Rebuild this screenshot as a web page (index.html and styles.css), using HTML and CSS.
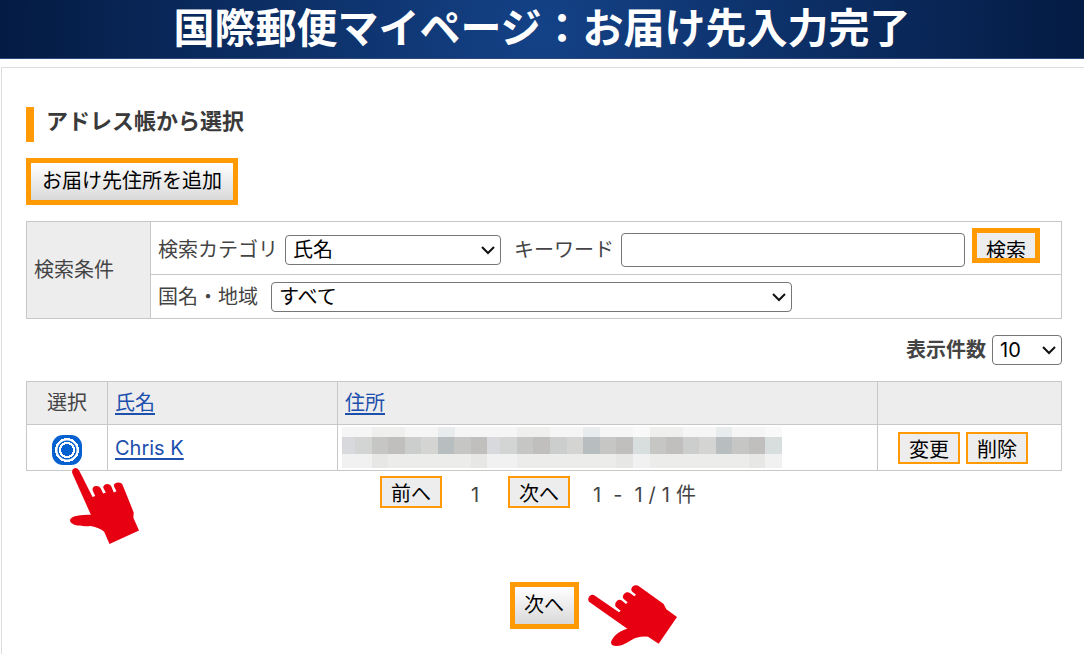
FILE: index.html
```html
<!DOCTYPE html>
<html lang="ja">
<head>
<meta charset="utf-8">
<title>国際郵便マイページ：お届け先入力完了</title>
<link rel="stylesheet" href="styles.css">
</head>
<body>
<header class="banner"><h1 class="banner-title">国際郵便マイページ：お届け先入力完了</h1></header>
<main class="panel">
  <h2 class="section-title">アドレス帳から選択</h2>
  <button class="btn-large" type="button">お届け先住所を追加</button>

  <table class="grid search">
    <tr>
      <th class="search-head" rowspan="2" scope="rowgroup">検索条件</th>
      <td class="search-first">
        <div class="fields">
          <label for="category">検索カテゴリ</label>
          <span class="select select-category">
            <select id="category"><option>氏名</option></select>
            <svg class="chevron" viewBox="0 0 14 9"><path d="M1 1l6 6 6-6"/></svg>
          </span>
          <label class="keyword-label" for="keyword">キーワード</label>
          <input class="keyword" id="keyword" type="text">
          <button class="btn-search" type="button">検索</button>
        </div>
      </td>
    </tr>
    <tr>
      <td class="search-second">
        <div class="fields fields-country">
          <label for="country">国名・地域</label>
          <span class="select select-country">
            <select id="country"><option>すべて</option></select>
            <svg class="chevron" viewBox="0 0 14 9"><path d="M1 1l6 6 6-6"/></svg>
          </span>
        </div>
      </td>
    </tr>
  </table>

  <div class="count">
    <label class="count-label" for="count">表示件数</label>
    <span class="select select-count">
      <select id="count"><option>10</option></select>
      <svg class="chevron" viewBox="0 0 14 9"><path d="M1 1l6 6 6-6"/></svg>
    </span>
  </div>

  <table class="grid results">
    <colgroup><col class="col-pick"><col class="col-name"><col class="col-address"><col class="col-actions"></colgroup>
    <thead>
      <tr>
        <th class="center" scope="col">選択</th>
        <th scope="col"><a href="#">氏名</a></th>
        <th scope="col"><a href="#">住所</a></th>
        <th></th>
      </tr>
    </thead>
    <tbody>
      <tr>
        <td class="pick">
          <input class="radio" type="radio" name="address" aria-label="Chris K" checked>
          <svg class="hand hand-radio" viewBox="87 126 214 235"><path d="M97 145C94 134 101 129 107 129Q114 129 118 137L158 216L166 213L159 198C156 189 160 184 168 183Q178 182 182 189L190 206L198 203L191 190C188 182 195 178 202 177Q210 177 214 183L222 203L230 199L223 185C220 178 226 174 235 173Q244 172 248 179L282 263L281 279L298 317L209 358L193 321Q178 309 153 304C128 306 90 304 90 286C94 272 125 270 153 270Z"/></svg>
        </td>
        <td><a href="#">Chris K</a></td>
        <td class="address">
          <svg class="mosaic" viewBox="0 0 442 41" shape-rendering="crispEdges">
            <path fill="#f4f5f4" d="M0 0H440V10H0Z"/>
            <path fill="#efefee" d="M30 0h33v10H30zM175 0h33v10h-33zM308 0h33v10h-33z"/>
            <path fill="#e9ecec" d="M96 0h17v10H96zM241 0h17v10h-17zM374 0h16v10h-16z"/>
            <path fill="#f9f9f9" d="M291 0h17v10h-17zM423 0h17v10h-17z"/>
            <path fill="#ececeb" d="M0 27H440V41H0Z"/>
            <path fill="#f1f1f2" d="M0 27h30v14H0zM145 27h30v14h-30zM291 27h17v14h-17zM423 27h17v14h-17z"/>
            <path fill="#e7e7e6" d="M30 27h16v14H30zM129 27h16v14h-16zM274 27h17v14h-17zM407 27h16v14h-16z"/>
            <path fill="#d8d9dc" d="M0 10h13v17H0zM145 10h13v17h-13z"/>
            <path fill="#d3d5d4" d="M13 10h17v17H13zM158 10h17v17h-17z"/>
            <path fill="#c6c6c4" d="M30 10h16v17H30zM175 10h16v17h-16zM308 10h16v17h-16zM112 10h17v17h-17zM258 10h16v17h-16zM390 10h17v17h-17z"/>
            <path fill="#c0bfbd" d="M46 10h17v17H46zM191 10h17v17h-17zM324 10h17v17h-17zM129 10h16v17h-16zM274 10h17v17h-17zM407 10h16v17h-16z"/>
            <path fill="#cbcecd" d="M63 10h16v17H63zM208 10h17v17h-17zM341 10h16v17h-16z"/>
            <path fill="#d4d4d3" d="M79 10h17v17H79zM225 10h16v17h-16zM357 10h17v17h-17z"/>
            <path fill="#b8bdbf" d="M96 10h16v17H96zM241 10h17v17h-17zM374 10h16v17h-16z"/>
            <path fill="#d8dddd" d="M291 10h17v17h-17zM423 10h17v17h-17z"/>
          </svg>
        </td>
        <td>
          <div class="actions">
            <button class="btn-small" type="button">変更</button>
            <button class="btn-small" type="button">削除</button>
          </div>
        </td>
      </tr>
    </tbody>
  </table>

  <nav class="pager">
    <button class="btn-small" type="button">前へ</button>
    <span class="page">1</span>
    <button class="btn-small" type="button">次へ</button>
    <span class="range"><span>1</span><span>-</span><span class="total"><span>1</span><span>/</span><span>1</span><span>件</span></span></span>
  </nav>

  <div class="next">
    <button class="btn-large btn-next" type="button">次へ</button>
    <svg class="hand hand-next" viewBox="290 72 273 189"><path d="M298 127C290 120 294 108 303 105Q309 103 315 108L386 157L391 152L378 142C371 135 376 124 384 120Q390 118 396 123L407 132L412 127L401 118C393 111 400 100 409 97Q416 95 422 101L432 109L437 104L426 95C419 88 425 79 434 76Q441 75 448 80L520 132L528 148L560 171L505 251L473 230Q455 229 438 233C421 238 404 257 377 258C361 258 359 248 366 238C374 222 392 212 411 206Z"/></svg>
  </div>
</main>
</body>
</html>
```

FILE: styles.css
```css
* { box-sizing: border-box; }

body {
  margin: 0;
  background: #fff;
  color: #444;
  font: 20px/30px Inter, "Noto Sans CJK JP", sans-serif;
}

button, input, select { font: inherit; color: #000; margin: 0; }
button { white-space: nowrap; }
a { color: #1d4fad; text-underline-offset: 3px; text-decoration-thickness: 2px; }

.banner {
  height: 59px;
  background: radial-gradient(circle farthest-side at 50% 50%, #144287, #041b43);
  border-bottom: 1px solid #2c4a7c;
}
.banner-title {
  margin: 0;
  color: #fff;
  font: bold 41px/50px "Noto Sans CJK JP", sans-serif;
  text-align: center;
}

.panel {
  min-height: calc(100vh - 67px);
  margin: 8px 0 0 1px;
  padding: 39px 22px 16px 24px;
  border: solid #ddd;
  border-width: 1px 0 0 1px;
}

.section-title {
  margin: 0 0 16px;
  padding: 0 0 6px 12px;
  border-left: 8px solid #ff9a05;
  color: #3a3a3a;
  font-size: 22px;
  line-height: 29px;
}

.btn-large {
  display: block;
  height: 47px;
  padding: 0 11px;
  border: 5px solid #ff9a05;
  background: linear-gradient(#fff, #d9d9d9);
  line-height: 37px;
}
.btn-next { width: 100%; padding: 0; }

.grid { width: 100%; border-collapse: collapse; table-layout: fixed; }
.grid th, .grid td { padding: 0 7px; border: 1px solid #c8c8c8; text-align: left; font-weight: 400; }
.grid th { background: #ededed; }

.search { margin-top: 16px; }
.search-head { width: 124px; }
.grid .search-first { height: 53px; padding-top: 4px; }
.search-second { height: 44px; }
.fields { display: flex; align-items: center; gap: 7px; }
.fields-country { gap: 13px; }
.keyword-label { margin-left: 6px; }

.select { position: relative; display: block; height: 30px; }
.select select {
  display: block;
  width: 100%;
  height: 100%;
  padding: 0 7px;
  border: 1px solid #767676;
  border-radius: 4px;
  background: #fff;
  line-height: 26px;
  appearance: none;
}
.chevron {
  position: absolute;
  top: 11px;
  right: 6px;
  width: 14px;
  height: 9px;
  fill: none;
  stroke: #111;
  stroke-width: 2;
  pointer-events: none;
}
.select-category { flex: 0 0 216px; }
.select-country { flex: 0 1 521px; }
.select-count { width: 70px; }

.keyword {
  flex: 1;
  min-width: 0;
  height: 34px;
  padding: 0 6px;
  border: 1px solid #767676;
  border-radius: 4px;
}
.btn-search {
  height: 35px;
  margin: 0 14px 9px 0;
  padding: 3px 9px 0;
  border: 5px solid #ff9a05;
  background: #ededed;
  line-height: 30px;
  overflow: hidden;
}

.count { display: flex; justify-content: flex-end; gap: 6px; margin: 16px 0; }
.count-label { font-weight: 700; }

.col-pick { width: 81px; }
.col-name { width: 230px; }
.col-actions { width: 184px; }
.results th { height: 43px; }
.results td { height: 46px; }
.grid .center { text-align: center; }
.grid .pick { position: relative; text-align: center; }
.grid .address { padding: 0 4px; }
.mosaic { display: block; width: 442px; max-width: 100%; }
.actions { display: flex; justify-content: center; gap: 6px; padding-right: 13px; }

.radio {
  display: block;
  width: 30px;
  height: 30px;
  margin: 4px auto 0;
  border-radius: 11px;
  appearance: none;
  background: radial-gradient(circle closest-side, #0560d0 6px, #fff 6px, #fff 8px, #0560d0 8px, #0560d0 9px, #fff 10px, #fff 12px, #0560d0 12px);
}

.btn-small {
  height: 32px;
  padding: 4px 9px 0;
  border: 2px solid #ff9a05;
  background: #ededed;
  line-height: 24px;
  overflow: hidden;
}

.pager {
  display: flex;
  justify-content: center;
  align-items: flex-start;
  margin-top: 5px;
  padding-right: 12px;
}
.page { width: 66px; padding-top: 4px; text-align: center; }
.range { display: flex; gap: 12px; padding: 4px 0 0 23px; }
.total { display: flex; gap: 6px; }

.next { position: relative; width: 69px; margin: 72px auto 0; }
.hand { position: absolute; fill: #e70012; pointer-events: none; }
.hand-radio { top: 42px; left: 42px; width: 71px; height: 78px; }
.hand-next { top: 2px; left: 77px; width: 91px; height: 63px; }
```
